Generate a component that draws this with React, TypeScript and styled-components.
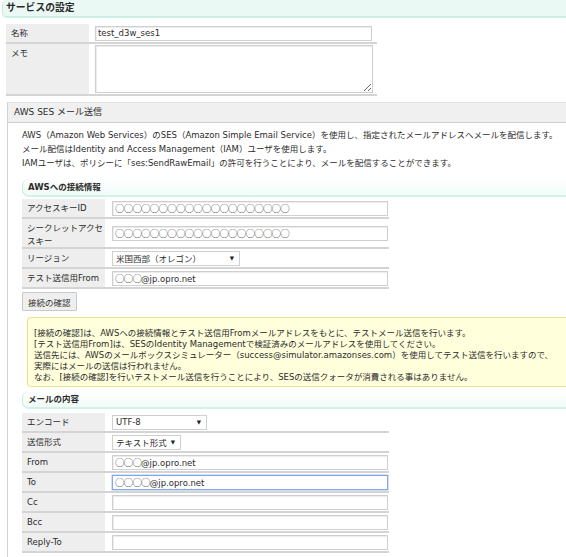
import * as React from 'react';
import styled, { createGlobalStyle } from 'styled-components';

const GlobalStyle = createGlobalStyle`
  html, body {
    margin: 0;
    padding: 0;
    overflow: hidden;
    background: #ffffff;
  }
  body {
    font-family: "DejaVu Sans", "Noto Sans CJK JP", sans-serif;
    font-size: 8.5px;
    color: #2b2b2b;
  }
`;

const Page = styled.div`
  width: 580px;
  padding-left: 2px;
`;

const SectionTitle = styled.div`
  height: 16px;
  line-height: 16px;
  padding-left: 3px;
  font-size: 9.8px;
  font-weight: bold;
  background: #ebf9f4;
  border-left: 1px solid #c8ecdf;
  border-bottom: 2px solid #c8efe3;
  border-radius: 5px 0 0 5px;
`;

const SubTitle = styled.div<{ $top: number }>`
  margin-top: ${p => p.$top}px;
  height: 16px;
  line-height: 16px;
  padding-left: 5px;
  font-weight: bold;
  background: linear-gradient(#ffffff, #f1fbf7);
  border-left: 1px solid #c8ecdf;
  border-bottom: 2px solid #d0f2e7;
  border-radius: 7px 0 0 7px;
`;

const Table = styled.div<{ $left: number; $width: number; $top: number }>`
  margin: ${p => p.$top}px 0 0 ${p => p.$left}px;
  width: ${p => p.$width}px;
`;

const Row = styled.div`
  display: grid;
  grid-template-columns: 83px 1fr;
  column-gap: 1px;
  border-bottom: 2px solid #d4d4d4;
  min-height: 18px;
`;

const Label = styled.div`
  background: #eeeeee;
  padding: 3px 0 0 5px;
  line-height: 12.5px;
`;

const Value = styled.div<{ $pad: number }>`
  display: flex;
  align-items: center;
  padding: 1px 0 1px ${p => p.$pad}px;
`;

const TextBox = styled.div<{ $width: number; $focused?: boolean }>`
  box-sizing: border-box;
  width: ${p => p.$width}px;
  height: 15px;
  line-height: 13px;
  padding-left: 2px;
  white-space: nowrap;
  overflow: hidden;
  background: #ffffff;
  border: 1px solid ${p => (p.$focused ? '#7ea8ea' : '#cfcfcf')};
  box-shadow: ${p => (p.$focused ? '0 0 0 0.5px #a9c6f3' : 'inset 1px 1px 0 #ececec')};
`;

const Memo = styled.textarea`
  box-sizing: border-box;
  align-self: flex-start;
  width: 278px;
  height: 48px;
  margin: 0;
  border: 1px solid #cfcfcf;
  box-shadow: inset 1px 1px 0 #ececec;
  font: inherit;
  resize: vertical;
  outline: none;
`;

const Mask = styled.span`
  font-family: "Noto Sans CJK JP", sans-serif;
  font-size: 9.5px;
  letter-spacing: -0.8px;
  color: #444444;
`;

const Misspelled = styled.span`
  text-decoration: underline wavy #e03030;
  text-decoration-thickness: 1px;
  text-underline-offset: 2px;
`;

const SelectBox = styled.div<{ $width: number }>`
  box-sizing: border-box;
  display: flex;
  align-items: center;
  justify-content: space-between;
  width: ${p => p.$width}px;
  height: 15px;
  padding: 0 5px 0 3px;
  background: #ffffff;
  border: 1px solid #cfcfcf;
`;

const Caret = styled.span`
  font-size: 5.5px;
  color: #222222;
`;

const Panel = styled.section`
  margin: 6px 0 0 5px;
  border-left: 1px solid #d2d2d2;
`;

const PanelHeader = styled.div`
  height: 19px;
  line-height: 19px;
  padding-left: 6px;
  font-size: 9px;
  background: #f0f0f0;
  border-top: 1px solid #e2e2e2;
  border-bottom: 1px solid #cccccc;
`;

const PanelBody = styled.div`
  padding: 5px 0 0 14px;
`;

const Description = styled.p`
  margin: 0;
  line-height: 14px;
  white-space: nowrap;
`;

const Button = styled.button`
  display: block;
  margin-top: 3px;
  height: 19px;
  padding: 0 5px;
  font: inherit;
  color: #333333;
  background: #efefef;
  border: 1px solid #c8c8c8;
  border-radius: 1px;
`;

const Note = styled.div`
  margin: 6px 0 0 5px;
  padding: 10px 0 3px 6px;
  line-height: 11px;
  white-space: nowrap;
  background: #ffffdc;
  border: 1px solid #ece48a;
  border-right: none;
  border-radius: 4px 0 0 4px;
`;

type Field = {
  label: React.ReactNode;
  control: React.ReactNode;
};

const circles = (n: number) => <Mask>{'○'.repeat(n)}</Mask>;

const FieldTable = ({ rows, left, width, top, pad }: {
  rows: Field[];
  left: number;
  width: number;
  top: number;
  pad: number;
}) => (
  <Table $left={left} $width={width} $top={top}>
    {rows.map((r, i) => (
      <Row key={i}>
        <Label>{r.label}</Label>
        <Value $pad={pad}>{r.control}</Value>
      </Row>
    ))}
  </Table>
);

const serviceRows: Field[] = [
  { label: '名称', control: <TextBox $width={277}>test_d3w_ses1</TextBox> },
  { label: 'メモ', control: <Memo defaultValue="" /> },
];

const connectionRows: Field[] = [
  { label: 'アクセスキーID', control: <TextBox $width={276}>{circles(20)}</TextBox> },
  {
    label: (
      <>
        シークレットアクセ
        <br />
        スキー
      </>
    ),
    control: <TextBox $width={276}>{circles(20)}</TextBox>,
  },
  {
    label: 'リージョン',
    control: (
      <SelectBox $width={128}>
        <span>米国西部（オレゴン）</span>
        <Caret>▼</Caret>
      </SelectBox>
    ),
  },
  {
    label: 'テスト送信用From',
    control: <TextBox $width={276}>{circles(3)}@jp.opro.net</TextBox>,
  },
];

const mailRows: Field[] = [
  {
    label: 'エンコード',
    control: (
      <SelectBox $width={95}>
        <span>UTF-8</span>
        <Caret>▼</Caret>
      </SelectBox>
    ),
  },
  {
    label: '送信形式',
    control: (
      <SelectBox $width={69}>
        <span>テキスト形式</span>
        <Caret>▼</Caret>
      </SelectBox>
    ),
  },
  { label: 'From', control: <TextBox $width={276}>{circles(3)}@jp.opro.net</TextBox> },
  {
    label: 'To',
    control: (
      <TextBox $width={276} $focused>
        {circles(4)}@<Misspelled>jp.opro.net</Misspelled>
      </TextBox>
    ),
  },
  { label: 'Cc', control: <TextBox $width={276} /> },
  { label: 'Bcc', control: <TextBox $width={276} /> },
  { label: 'Reply-To', control: <TextBox $width={276} /> },
];

export default function App() {
  return (
    <Page>
      <GlobalStyle />
      <SectionTitle>サービスの設定</SectionTitle>
      <FieldTable rows={serviceRows} left={4} width={371} top={6} pad={5} />

      <Panel>
        <PanelHeader>AWS SES メール送信</PanelHeader>
        <PanelBody>
          <Description>
            AWS（Amazon Web Services）のSES（Amazon Simple Email Service）を使用し、指定されたメールアドレスへメールを配信します。
          </Description>
          <Description>
            メール配信はIdentity and Access Management（IAM）ユーザを使用します。
          </Description>
          <Description>
            IAMユーザは、ポリシーに「ses:SendRawEmail」の許可を行うことにより、メールを配信することができます。
          </Description>

          <SubTitle $top={9}>AWSへの接続情報</SubTitle>
          <FieldTable rows={connectionRows} left={0} width={367} top={2} pad={6} />
          <Button type="button">接続の確認</Button>

          <Note>
            [接続の確認]は、AWSへの接続情報とテスト送信用Fromメールアドレスをもとに、テストメール送信を行います。
            <br />
            [テスト送信用From]は、SESのIdentity Managementで検証済みのメールアドレスを使用してください。
            <br />
            送信先には、AWSのメールボックスシミュレーター（success@simulator.amazonses.com）を使用してテスト送信を行いますので、
            <br />
            実際にはメールの送信は行われません。
            <br />
            なお、[接続の確認]を行いテストメール送信を行うことにより、SESの送信クォータが消費される事はありません。
          </Note>

          <SubTitle $top={4}>メールの内容</SubTitle>
          <FieldTable rows={mailRows} left={0} width={367} top={4} pad={6} />
          <SubTitle $top={4} />
        </PanelBody>
      </Panel>
    </Page>
  );
}
